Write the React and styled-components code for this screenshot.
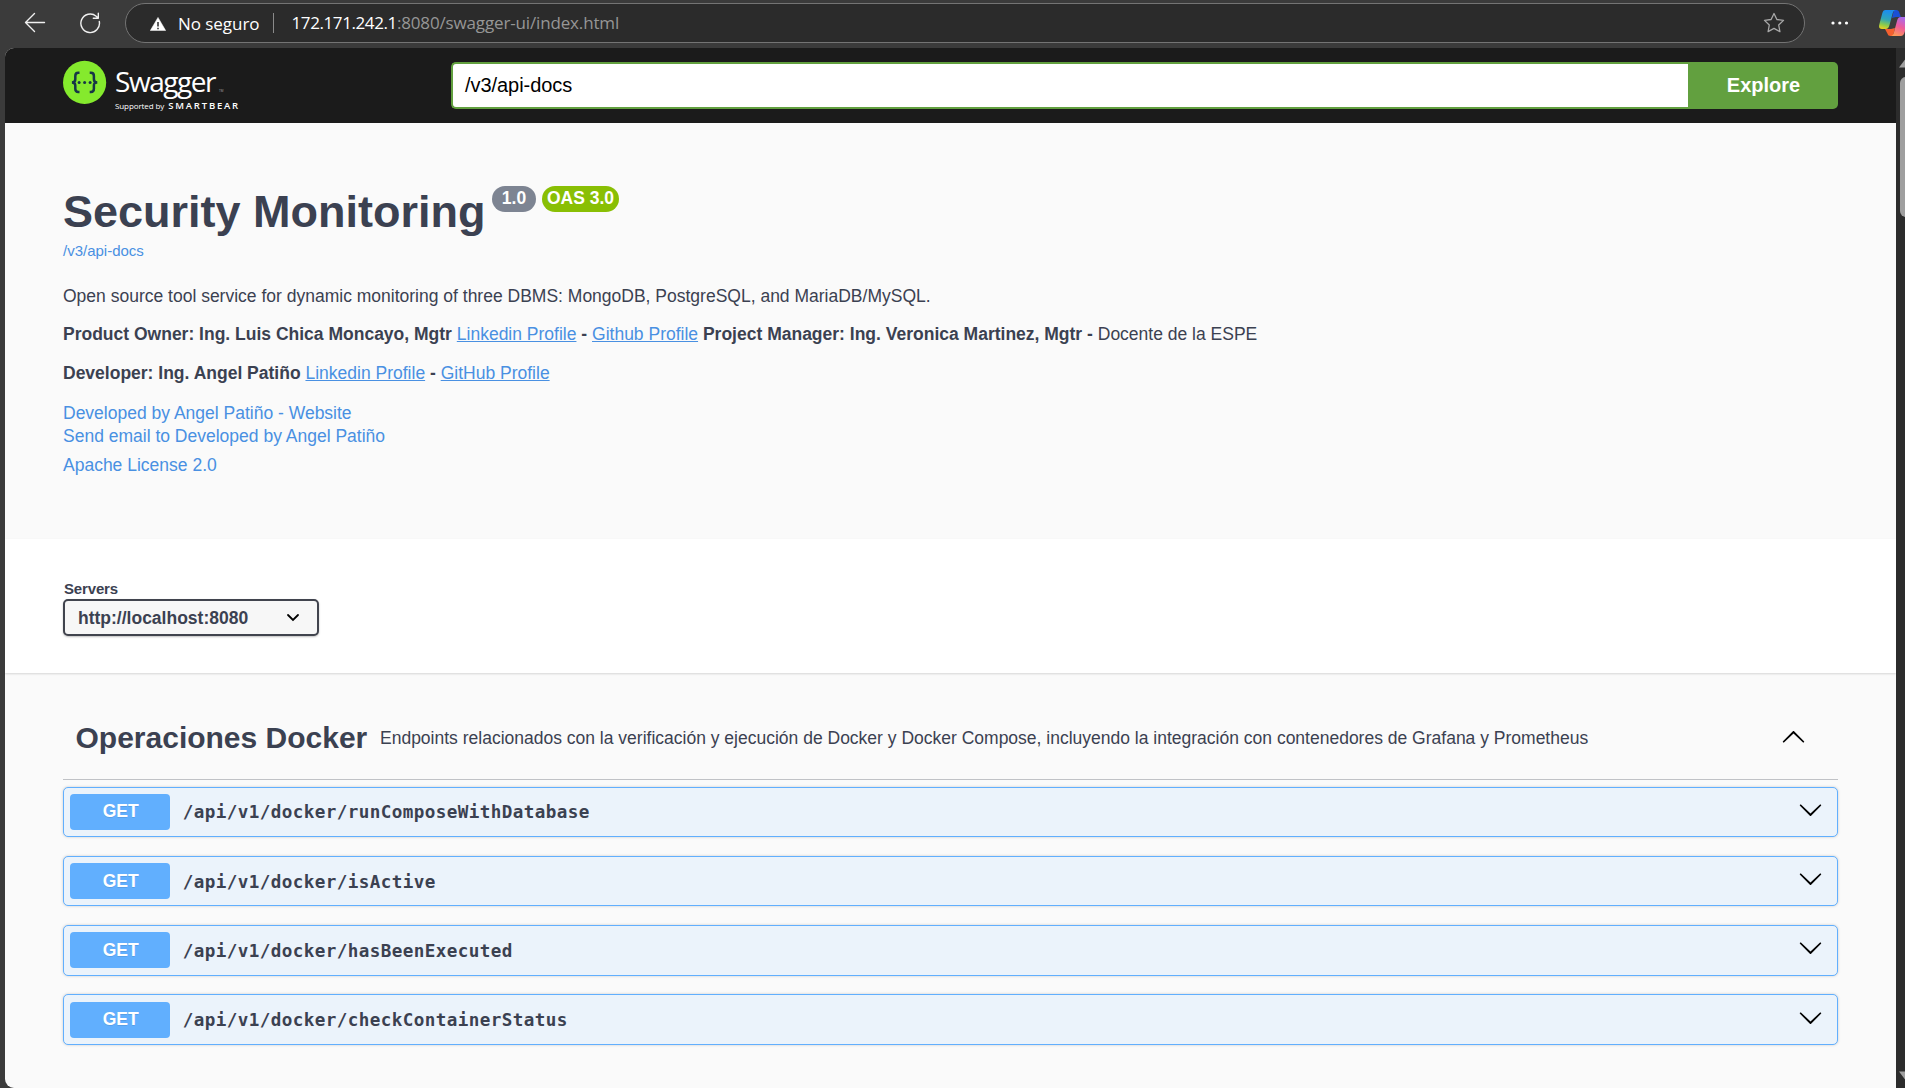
import React from "react";
import styled, { createGlobalStyle } from "styled-components";

const Global = createGlobalStyle`
  * { box-sizing: border-box; }
  html, body { margin: 0; height: 100%; overflow: hidden; background: #3b3b3b; }
  body { font-family: "Liberation Sans", Arial, sans-serif; color: #3b4151; }
  #root { height: 100%; }
  p, h1, h2 { margin: 0; }
`;

const Browser = styled.div`
  display: flex;
  flex-direction: column;
  height: 1088px;
  background: #3b3b3b;
  overflow: hidden;
`;

const Chrome = styled.header`
  display: flex;
  align-items: flex-start;
  height: 48px;
  flex: none;
  padding: 3px 0 0 24px;
`;

const ChromeIcon = styled.svg`
  display: block;
  flex: none;
  fill: none;
  margin: ${(p) => p.$margin || "0"};
`;

const AddressBar = styled.div`
  display: flex;
  align-items: center;
  flex: none;
  width: 1680px;
  height: 40px;
  margin-left: 24px;
  padding: 0 19px 0 24px;
  background: #2b2b2b;
  border: 1px solid #747474;
  border-radius: 20px;
  font-family: "Open Sans", "Noto Sans", sans-serif;
  font-size: 17px;
  line-height: 24px;
  color: #fff;
  white-space: nowrap;
`;

const Safety = styled.span`
  width: 95px;
  margin-left: 12px;
  padding-top: 1px;
  letter-spacing: -0.05px;
`;

const Divider = styled.span`
  width: 1px;
  height: 20px;
  background: #8a8a8a;
`;

const Url = styled.span`
  flex: 1;
  margin-left: 17.5px;
  color: #969696;
  letter-spacing: -0.15px;
`;

const Host = styled.span`
  color: #fff;
  letter-spacing: -0.4px;
`;

const Body = styled.div`
  display: flex;
  flex: 1;
  min-height: 0;
  padding-left: 5px;
`;

const Page = styled.main`
  display: flex;
  flex-direction: column;
  width: 1891px;
  background: #fafafa;
  border-radius: 9px 0 0 9px;
  overflow: hidden;
`;

const ScrollTrack = styled.div`
  display: flex;
  flex-direction: column;
  align-items: flex-start;
  width: 9px;
  padding: 11px 0 8px 3px;
  background: #2c2c2c;
  overflow: hidden;
`;

const ScrollThumb = styled.div`
  width: 12px;
  height: 140px;
  margin: 9px 0 auto 1px;
  background: #9f9f9f;
  border-radius: 6px;
`;

const Topbar = styled.div`
  display: flex;
  height: 75px;
  flex: none;
  padding: 12px 58px 0;
  background: #1b1b1b;
`;

const Logo = styled.div`
  display: flex;
  width: 388px;
  color: #fff;
`;

const Wordmark = styled.div`
  display: flex;
  flex-direction: column;
  margin: 2px 0 0 8px;
  font-family: "Open Sans", "Noto Sans", sans-serif;
  white-space: nowrap;
`;

const Brand = styled.span`
  height: 38px;
  font-size: 28px;
  line-height: 38px;
  letter-spacing: -1.45px;
  font-weight: 400;

  small { font-size: 3px; letter-spacing: 0; margin-left: 4px; color: #aaa; }
`;

const Support = styled.span`
  display: flex;
  align-items: baseline;
  height: 12px;
  font-size: 8px;
  line-height: 12px;
  letter-spacing: -0.1px;

  b { margin-left: 4px; font-size: 9.5px; font-weight: 600; letter-spacing: 1.8px; }
`;

const DocInput = styled.div`
  display: flex;
  align-items: center;
  flex: 1;
  height: 47px;
  margin-top: 2px;
  padding: 0 0 1px 12px;
  background: #fff;
  border: 2px solid #62a03f;
  border-right: 0;
  border-radius: 5px 0 0 5px;
  color: #000;
  font-size: 20px;
  letter-spacing: -0.05px;
`;

const Explore = styled.button`
  width: 150px;
  height: 47px;
  margin-top: 2px;
  padding: 0 0 0 1px;
  border: 0;
  border-radius: 0 5px 5px 0;
  background: #62a03f;
  color: #fff;
  font: bold 20px "Liberation Sans", Arial, sans-serif;
`;

const Info = styled.section`
  display: flex;
  flex-direction: column;
  align-items: flex-start;
  height: 416px;
  flex: none;
  padding: 63px 58px 0;
  font-size: 17.5px;
  line-height: 20px;
`;

const TitleRow = styled.div`
  display: flex;
  height: 55px;
`;

const Title = styled.h1`
  font-size: 45px;
  line-height: 52px;
  white-space: nowrap;
`;

const Badge = styled.span`
  display: block;
  width: ${(p) => p.$width}px;
  height: 26px;
  margin-left: ${(p) => p.$gap}px;
  padding-left: 1px;
  border-radius: 13px;
  background: ${(p) => p.$color};
  color: #fff;
  font-size: 17.5px;
  font-weight: bold;
  line-height: 24px;
  text-align: center;
  white-space: nowrap;
`;

const Link = styled.a`
  color: #4990e2;
  text-decoration: ${(p) => (p.$underline ? "underline" : "none")};
  font-size: ${(p) => p.$size || 17.5}px;
  margin-top: ${(p) => p.$top || 0}px;
`;

const Paragraph = styled.p`
  margin-top: ${(p) => p.$top}px;
  white-space: nowrap;
`;

const Servers = styled.section`
  display: flex;
  flex-direction: column;
  height: 134px;
  flex: none;
  padding: 41px 58px 0;
  background: #fff;
  box-shadow: 0 1px 2px rgba(0, 0, 0, 0.15);
  z-index: 1;
`;

const ServersLabel = styled.label`
  height: 19px;
  padding-left: 1px;
  font-size: 15px;
  font-weight: bold;
  line-height: 18px;
  letter-spacing: -0.15px;
`;

const Select = styled.div`
  display: flex;
  align-items: center;
  justify-content: space-between;
  width: 256px;
  height: 37px;
  padding: 1px 17px 0 13px;
  background: #f7f7f7;
  border: 2px solid #41444e;
  border-radius: 5px;
  box-shadow: 0 1px 2px rgba(0, 0, 0, 0.25);
  font-size: 17.5px;
  font-weight: bold;
`;

const Operations = styled.section`
  display: flex;
  flex-direction: column;
  padding: 25px 58px 0;
`;

const TagHeader = styled.div`
  display: flex;
  align-items: center;
  height: 82px;
  padding: 0 32px 2px 12.5px;
  border-bottom: 1px solid #c0c2c6;
`;

const TagName = styled.h2`
  width: 304.5px;
  padding-top: 1px;
  font-size: 30px;
  line-height: 34px;
  white-space: nowrap;
`;

const TagText = styled.p`
  flex: 1;
  font-size: 17.5px;
  line-height: 20px;
  white-space: nowrap;
`;

const OperationList = styled.div`
  display: flex;
  flex-direction: column;
  gap: 18.8px;
  padding-top: 6.9px;
`;

const Operation = styled.div`
  display: flex;
  align-items: flex-start;
  height: 50.35px;
  padding: 6.2px 14px 0 6.25px;
  background: #ebf3fb;
  border: 1px solid #61affe;
  border-radius: 5px;
  box-shadow: 0 0 3px rgba(0, 0, 0, 0.19);
`;

const Method = styled.span`
  width: 100px;
  height: 36px;
  padding-top: 0.3px;
  border-radius: 4px;
  background: #61affe;
  color: #fff;
  font-size: 17.5px;
  font-weight: bold;
  line-height: 34px;
  text-align: center;
  text-indent: 1px;
  text-shadow: 0 1px 0 rgba(0, 0, 0, 0.1);
`;

const Path = styled.span`
  flex: 1;
  padding: 0.3px 0 0 12.5px;
  font-family: "DejaVu Sans Mono", monospace;
  font-size: 17.6px;
  font-weight: bold;
  line-height: 36px;
  letter-spacing: 0.41px;
`;

const Arrow = styled.svg`
  display: block;
  flex: none;
  width: 25px;
  height: 25px;
  margin-top: ${(p) => p.$top || 0}px;
  transform: ${(p) => (p.$up ? "scaleY(-1)" : "none")};
`;

const operations = [
  "/api/v1/docker/runComposeWithDatabase",
  "/api/v1/docker/isActive",
  "/api/v1/docker/hasBeenExecuted",
  "/api/v1/docker/checkContainerStatus",
];

function Chevron(props) {
  return (
    <Arrow viewBox="0 0 20 20" {...props}>
      <path d="M17.418 6.109c.272-.268.709-.268.979 0s.271.701 0 .969l-7.908 7.83c-.27.268-.707.268-.979 0l-7.908-7.83c-.27-.268-.27-.701 0-.969.271-.268.709-.268.979 0L10 13.25l7.418-7.141z" />
    </Arrow>
  );
}

function SwaggerMark() {
  return (
    <svg width="44" height="46" viewBox="0 0 44 46">
      <circle cx="21.6" cy="22.4" r="21.6" fill="#85ea2d" />
      <g fill="none" stroke="#173647" strokeWidth="2.5">
        <path d="M16.500 12.800h-1.200c-2.300 0-3 1.200-3 3.200v3.200c0 2-.8 3.200-3.400 3.200 2.600 0 3.400 1.200 3.400 3.200v3.200c0 2 .7 3.200 3 3.200h1.200" />
        <path d="M26.700 12.800h1.200c2.300 0 3 1.200 3 3.200v3.200c0 2 .8 3.200 3.400 3.200-2.600 0-3.400 1.200-3.400 3.200v3.200c0 2-.7 3.200-3 3.200h-1.200" />
      </g>
      <g fill="#173647">
        <circle cx="16.1" cy="22.4" r="1.500" />
        <circle cx="21.6" cy="22.4" r="1.500" />
        <circle cx="27.1" cy="22.4" r="1.500" />
      </g>
    </svg>
  );
}

function CopilotMark() {
  return (
    <ChromeIcon width="29" height="27" viewBox="0 0 29 27" $margin="7px 0 0 30px">
      <defs>
        <linearGradient id="cool" x1="0.3" y1="0" x2="0.1" y2="1">
          <stop offset="0" stopColor="#1b8df0" />
          <stop offset="0.45" stopColor="#2fa5b8" />
          <stop offset="0.75" stopColor="#8ccb4c" />
          <stop offset="1" stopColor="#f5d21c" />
        </linearGradient>
        <linearGradient id="warm" x1="0.7" y1="0" x2="0.3" y2="1">
          <stop offset="0" stopColor="#a56bf0" />
          <stop offset="0.5" stopColor="#ee5c9a" />
          <stop offset="1" stopColor="#ff9a55" />
        </linearGradient>
      </defs>
      <path d="M15 0h2.5c1.6 0 2.3.9 2.8 2.5L21.8 7H17l-4 1z" fill="#1a4fd6" />
      <path d="M6 19h6l4-1-2 8h-2.500c-1.600 0-2.600-.8-3.100-2.500z" fill="#f4602f" />
      <path d="M6.500 0H17c-2 0-2.800 1.400-3.400 3.500L10.500 15c-.7 2.600-1.600 4-4 4H3c-2.500 0-3.500-1.800-2.700-4.500L3.200 3.500C3.900 1 4.700 0 6.500 0z" fill="url(#cool)" />
      <path d="M22 7h4c2.500 0 3.500 1.800 2.700 4.500l-3 10.500c-.8 2.800-1.900 4-4 4H11.500c2 0 2.800-1.400 3.400-3.500L18 11c.7-2.600 1.600-4 4-4z" fill="url(#warm)" />
    </ChromeIcon>
  );
}

export default function App() {
  return (
    <Browser>
      <Global />
      <Chrome>
        <ChromeIcon width="22" height="22" viewBox="0 0 22 22" stroke="#f0f0f0" strokeWidth="1.4" strokeLinecap="round" strokeLinejoin="round" $margin="8px 0 0">
          <path d="M20.500 11.500H1.500M10.500 2.500l-9 9 9 9" />
        </ChromeIcon>
        <ChromeIcon width="22" height="22" viewBox="0 0 22 22" stroke="#f0f0f0" strokeWidth="1.4" strokeLinecap="round" strokeLinejoin="round" $margin="9px 0 0 33px">
          <path d="M20.300 9.500a9.300 9.300 0 1 1-3.100-5.300l2 1.900M19.300 1.300v4.900h-5" />
        </ChromeIcon>
        <AddressBar>
          <ChromeIcon width="16" height="14" viewBox="0 0 16 14" $margin="1px 0 0">
            <path d="M8 .4 15.700 13.600H.3z" fill="#fff" stroke="#fff" strokeWidth=".5" strokeLinejoin="round" />
            <path d="M8 5v4.500M8 10.700v1.600" stroke="#2b2b2b" strokeWidth="1.500" />
          </ChromeIcon>
          <Safety>No seguro</Safety>
          <Divider />
          <Url><Host>172.171.242.1</Host>:8080/swagger-ui/index.html</Url>
          <ChromeIcon width="22" height="22" viewBox="0 0 22 22" stroke="#a8a8a8" strokeWidth="1.300" strokeLinejoin="round">
            <path d="m11 1.500 2.900 6 6.600.9-4.800 4.600 1.200 6.600-5.900-3.200-5.900 3.200 1.200-6.600L1.500 8.400l6.600-.9z" />
          </ChromeIcon>
        </AddressBar>
        <ChromeIcon width="18" height="4" viewBox="0 0 18 4" $margin="18px 0 0 26px">
          <g fill="#fff"><circle cx="2" cy="2" r="1.600" /><circle cx="8.800" cy="2" r="1.600" /><circle cx="15.500" cy="2" r="1.600" /></g>
        </ChromeIcon>
        <CopilotMark />
      </Chrome>
      <Body>
        <Page>
          <Topbar>
            <Logo>
              <SwaggerMark />
              <Wordmark>
                <Brand>Swagger<small>TM</small></Brand>
                <Support>Supported by <b>SMARTBEAR</b></Support>
              </Wordmark>
            </Logo>
            <DocInput>/v3/api-docs</DocInput>
            <Explore>Explore</Explore>
          </Topbar>
          <Info>
            <TitleRow>
              <Title>Security Monitoring</Title>
              <Badge $width={44} $gap={6} $color="#7d8492">1.0</Badge>
              <Badge $width={77} $gap={6} $color="#89bf04">OAS 3.0</Badge>
            </TitleRow>
            <Link $size={15}>/v3/api-docs</Link>
            <Paragraph $top={25}>Open source tool service for dynamic monitoring of three DBMS: MongoDB, PostgreSQL, and MariaDB/MySQL.</Paragraph>
            <Paragraph $top={18}>
              <b>Product Owner: Ing. Luis Chica Moncayo, Mgtr</b> <Link $underline>Linkedin Profile</Link> <b>-</b> <Link $underline>Github Profile</Link> <b>Project Manager: Ing. Veronica Martinez, Mgtr -</b> Docente de la ESPE
            </Paragraph>
            <Paragraph $top={19}>
              <b>Developer: Ing. Angel Patiño</b> <Link $underline>Linkedin Profile</Link> <b>-</b> <Link $underline>GitHub Profile</Link>
            </Paragraph>
            <Link $top={20}>Developed by Angel Patiño - Website</Link>
            <Link $top={3}>Send email to Developed by Angel Patiño</Link>
            <Link $top={9}>Apache License 2.0</Link>
          </Info>
          <Servers>
            <ServersLabel>Servers</ServersLabel>
            <Select>
              http://localhost:8080
              <svg width="14" height="10" viewBox="0 0 14 10">
                <path d="m2 2 5 5 5-5" fill="none" stroke="#000" strokeWidth="1.800" strokeLinecap="round" />
              </svg>
            </Select>
          </Servers>
          <Operations>
            <TagHeader>
              <TagName>Operaciones Docker</TagName>
              <TagText>Endpoints relacionados con la verificación y ejecución de Docker y Docker Compose, incluyendo la integración con contenedores de Grafana y Prometheus</TagText>
              <Chevron $up />
            </TagHeader>
            <OperationList>
              {operations.map((path) => (
                <Operation key={path}>
                  <Method>GET</Method>
                  <Path>{path}</Path>
                  <Chevron $top={3} />
                </Operation>
              ))}
            </OperationList>
          </Operations>
        </Page>
        <ScrollTrack>
          <svg width="14" height="9" viewBox="0 0 14 9"><path d="M0 8.500 5.800.8h2.400L14 8.500z" fill="#9f9f9f" /></svg>
          <ScrollThumb />
          <svg width="14" height="9" viewBox="0 0 14 9"><path d="M0 .5h14L8.200 8.200H5.800z" fill="#9f9f9f" /></svg>
        </ScrollTrack>
      </Body>
    </Browser>
  );
}
